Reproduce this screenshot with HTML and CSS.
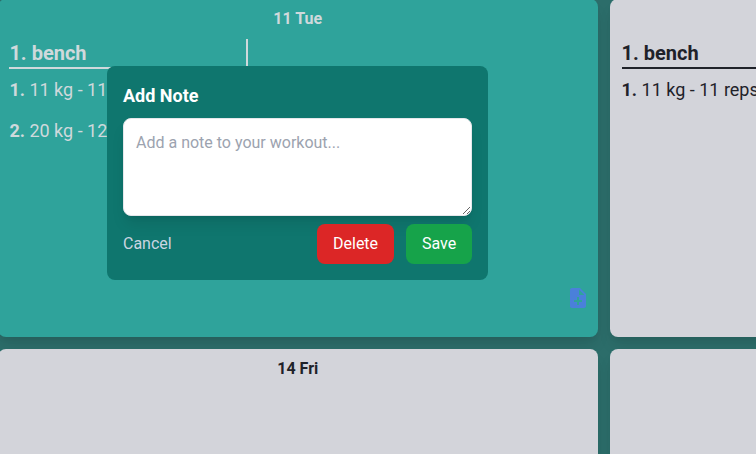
FILE: index.html
```
<!DOCTYPE html>
<html lang="en">
<head>
<meta charset="utf-8">
<title>Workout calendar</title>
<link rel="stylesheet" href="styles.css">
</head>
<body>
<main class="calendar">
  <section class="day day-active">
    <h2 class="date">11 Tue</h2>
    <div class="exercises">
      <article class="exercise divided">
        <h3 class="exercise-name">1. bench</h3>
        <p class="set"><b>1.</b> 11 kg - 11</p>
        <p class="set"><b>2.</b> 20 kg - 12</p>
      </article>
    </div>
    <svg class="note-icon" viewBox="0 0 24 24" aria-hidden="true"><path d="M14 2H6c-1.1 0-1.99.9-1.99 2L4 20c0 1.1.89 2 1.99 2H18c1.1 0 2-.9 2-2V8l-6-6zm2 14h-3v3h-2v-3H8v-2h3v-3h2v3h3v2zm-3-7V3.500L18.500 9H13z"/></svg>
    <form class="note-modal">
      <h2 class="modal-title">Add Note</h2>
      <textarea class="note-input" placeholder="Add a note to your workout..."></textarea>
      <div class="actions">
        <button type="button" class="cancel">Cancel</button>
        <button type="button" class="button delete">Delete</button>
        <button type="button" class="button save">Save</button>
      </div>
    </form>
  </section>
  <section class="day">
    <h2 class="date"></h2>
    <div class="exercises">
      <article class="exercise">
        <h3 class="exercise-name">1. bench</h3>
        <p class="set"><b>1.</b> 11 kg - 11 reps</p>
      </article>
    </div>
  </section>
  <section class="day"><h2 class="date">14 Fri</h2></section>
  <section class="day"></section>
</main>
</body>
</html>
```
FILE: styles.css
```
* { box-sizing: border-box; }
body {
  margin: 0;
  height: 454px;
  overflow: hidden;
  background: #2c6d6a;
  font-family: Roboto, sans-serif;
  font-size: 16px;
  line-height: 24px;
  color: #1f2229;
}
h2, h3, p { margin: 0; }
.calendar {
  display: grid;
  grid-template-columns: 600px 600px;
  grid-auto-rows: 338px;
  gap: 12px;
  margin: -1px 0 0 -2px;
}
.day {
  position: relative;
  border-radius: 8px;
  padding: 8px 12px 8px 11.5px;
  background: #d3d4da;
  box-shadow: 0 10px 15px -3px rgba(0, 0, 0, .1), 0 4px 6px -2px rgba(0, 0, 0, .05);
}
.day-active { padding-left: 11.4px; background: #2fa39b; color: #cfd9dc; }
.date {
  height: 24px;
  font-size: 16px;
  font-weight: 700;
  text-align: center;
}
.exercises {
  display: grid;
  grid-template-columns: 238.500px;
  margin-top: 8px;
}
.day:not(.day-active) .exercises { grid-template-columns: 1fr; }
.exercise { min-height: 120px; }
.divided { border-right: 2px solid #cfd9dc; }
.exercise-name {
  height: 30px;
  border-bottom: 2px solid currentColor;
  font-size: 20px;
  line-height: 28px;
  font-weight: 700;
}
.set {
  margin-bottom: 13px;
  padding-top: 7px;
  height: 28px;
  font-size: 18px;
  line-height: 28px;
  white-space: nowrap;
}
.note-icon {
  position: absolute;
  right: 8px;
  bottom: 27px;
  width: 24px;
  height: 24px;
  fill: #4a80da;
}
.note-modal {
  position: absolute;
  left: 109px;
  top: 67px;
  width: 381px;
  height: 214px;
  padding: 16px;
  border-radius: 8px;
  background: #0f766e;
  color: #fff;
}
.modal-title {
  margin-bottom: 8px;
  font-size: 18px;
  line-height: 28px;
  font-weight: 700;
}
.note-input {
  display: block;
  width: 100%;
  height: 98px;
  padding: 12px;
  border: 1px solid #e5e7eb;
  border-radius: 8px;
  background: #fff;
  box-shadow: 0 10px 15px -3px rgba(0, 0, 0, .1), 0 4px 6px -4px rgba(0, 0, 0, .1);
  font: 16px/24px Roboto, sans-serif;
  resize: both;
}
.note-input::placeholder { color: #9ca3af; }
.actions {
  display: flex;
  align-items: center;
  gap: 12px;
  margin-top: 8px;
}
.actions button {
  border: 0;
  font: 16px/24px Roboto, sans-serif;
}
.actions .cancel {
  margin-right: auto;
  padding: 0;
  background: none;
  color: #cbd5e1;
}
.actions .button {
  height: 40px;
  padding: 8px 16px;
  border-radius: 8px;
  color: #fff;
}
.actions .delete { width: 77px; background: #dc2626; }
.actions .save { width: 66px; background: #16a34a; }
```
